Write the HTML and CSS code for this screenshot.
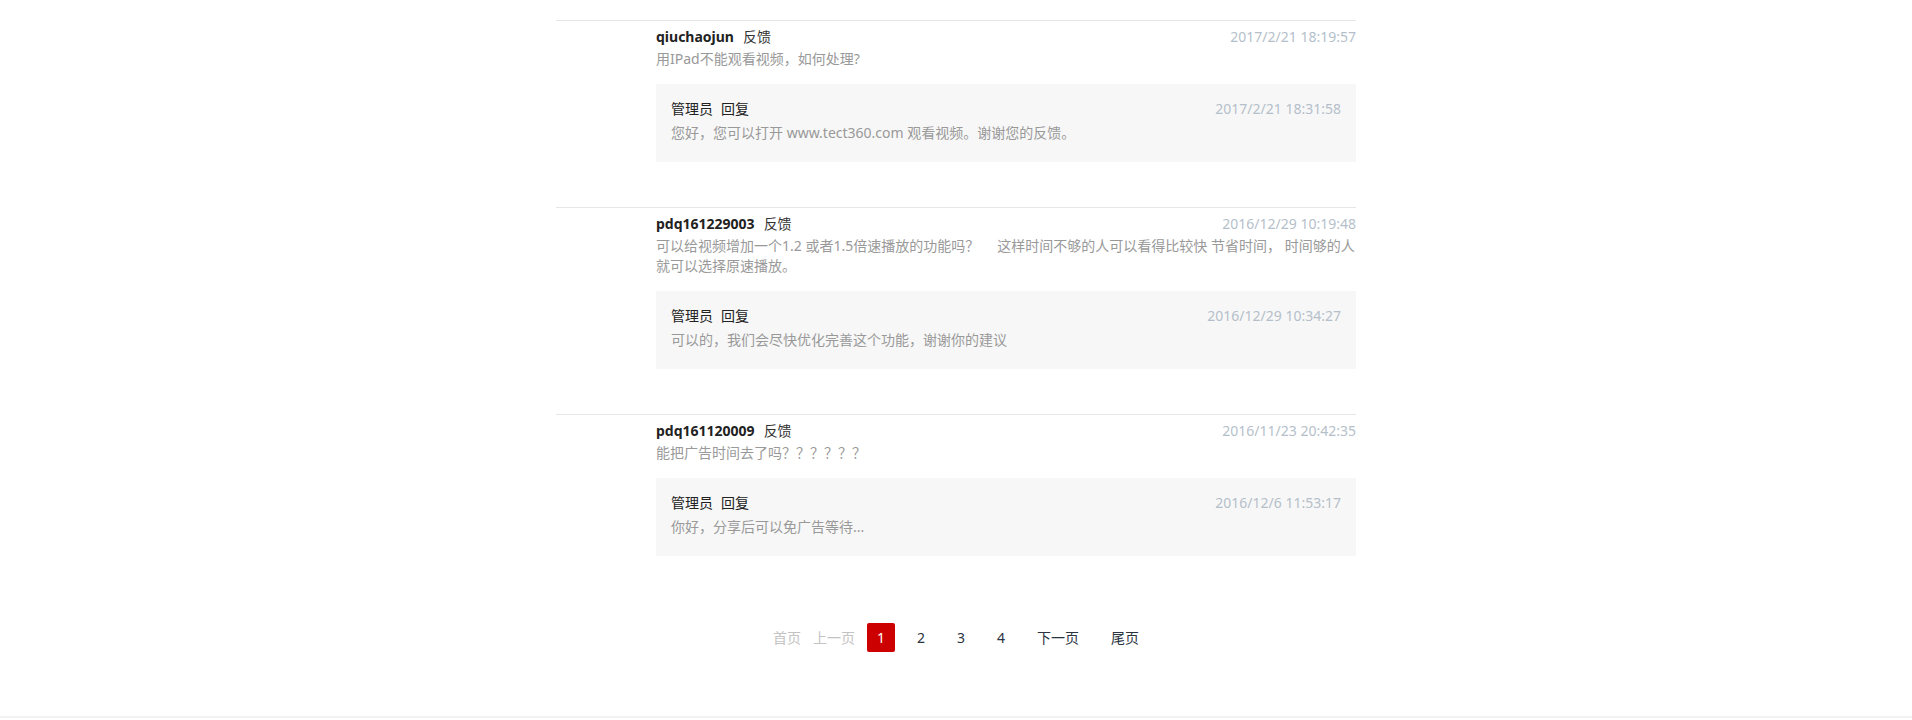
FILE: index.html
```html
<!DOCTYPE html>
<html>
<head>
	<meta charset="utf-8">
	<title>反馈</title>
	<link rel="stylesheet" href="styles.css">
</head>
<body>
<div class="wrap">
	<div class="item">
		<div class="head">
			<div><span class="name">qiuchaojun</span><span class="tag">反馈</span></div>
			<span class="date">2017/2/21 18:19:57</span>
		</div>
		<p class="ask">用IPad不能观看视频，如何处理?</p>
		<div class="reply">
			<div class="head2">
				<div><span class="admin">管理员</span><span class="tag2">回复</span></div>
				<span class="date">2017/2/21 18:31:58</span>
			</div>
			<p class="answer">您好，您可以打开 www.tect360.com 观看视频。谢谢您的反馈。</p>
		</div>
	</div>
	<div class="item">
		<div class="head">
			<div><span class="name">pdq161229003</span><span class="tag">反馈</span></div>
			<span class="date">2016/12/29 10:19:48</span>
		</div>
		<p class="ask">可以给视频增加一个1.2 或者1.5倍速播放的功能吗？&nbsp;&nbsp;&nbsp;&nbsp; 这样时间不够的人可以看得比较快 节省时间， 时间够的人就可以选择原速播放。</p>
		<div class="reply">
			<div class="head2">
				<div><span class="admin">管理员</span><span class="tag2">回复</span></div>
				<span class="date">2016/12/29 10:34:27</span>
			</div>
			<p class="answer">可以的，我们会尽快优化完善这个功能，谢谢你的建议</p>
		</div>
	</div>
	<div class="item">
		<div class="head">
			<div><span class="name">pdq161120009</span><span class="tag">反馈</span></div>
			<span class="date">2016/11/23 20:42:35</span>
		</div>
		<p class="ask">能把广告时间去了吗？？？？？？</p>
		<div class="reply">
			<div class="head2">
				<div><span class="admin">管理员</span><span class="tag2">回复</span></div>
				<span class="date">2016/12/6 11:53:17</span>
			</div>
			<p class="answer">你好，分享后可以免广告等待...</p>
		</div>
	</div>

	<div class="pager">
		<span class="off">首页</span>
		<span class="off">上一页</span>
		<a class="num cur">1</a>
		<a class="num">2</a>
		<a class="num">3</a>
		<a class="num">4</a>
		<a class="txt">下一页</a>
		<a class="txt">尾页</a>
	</div>
</div>
<div class="foot"></div>
</body>
</html>
```

FILE: styles.css
```css
*{
	margin:0px;
	padding:0px;
}
body{
	font-family: "Noto Sans", "Noto Sans CJK SC", sans-serif;
	font-size: 14px;
	color: #333;
	background: #fff;
}
.wrap{
	width: 800px;
	margin: 0 auto;
	padding-top: 20px;
}
.item{
	border-top: 1px solid #e6e6e6;
	padding: 4px 0 0 100px;
	margin-bottom: 45px;
}
.head,.head2{
	display: flex;
	justify-content: space-between;
	line-height: 24px;
}
.name{
	font-weight: bold;
	color: #222;
}
.tag{
	margin-left: 9px;
	color: #333;
}
.date{
	color: #b5bfca;
}
.ask{
	color: #999;
	line-height: 20px;
	margin-bottom: 15px;
}
.reply{
	background: #f7f7f7;
	padding: 14px 15px 18px;
}
.head2{
	line-height: 22px;
}
.admin{
	color: #222;
}
.tag2{
	margin-left: 8px;
	color: #222;
}
.answer{
	color: #999;
	line-height: 22px;
	margin-top: 2px;
}
.pager{
	display: flex;
	justify-content: center;
	gap: 12px;
	padding: 22px 0 0 10px;
}
.pager span,.pager a{
	height: 29px;
	line-height: 29px;
	text-align: center;
	cursor: pointer;
}
.pager .off{
	color: #c3c3c3;
}
.pager .num{
	width: 28px;
	color: #2a3340;
	border-radius: 2px;
}
.pager .cur{
	background: #cc0000;
	color: #fff;
}
.pager .txt{
	padding: 0 10px;
	color: #2a3340;
}
.foot{
	margin-top: 64px;
	border-top: 2px solid #f2f2f2;
}
```
